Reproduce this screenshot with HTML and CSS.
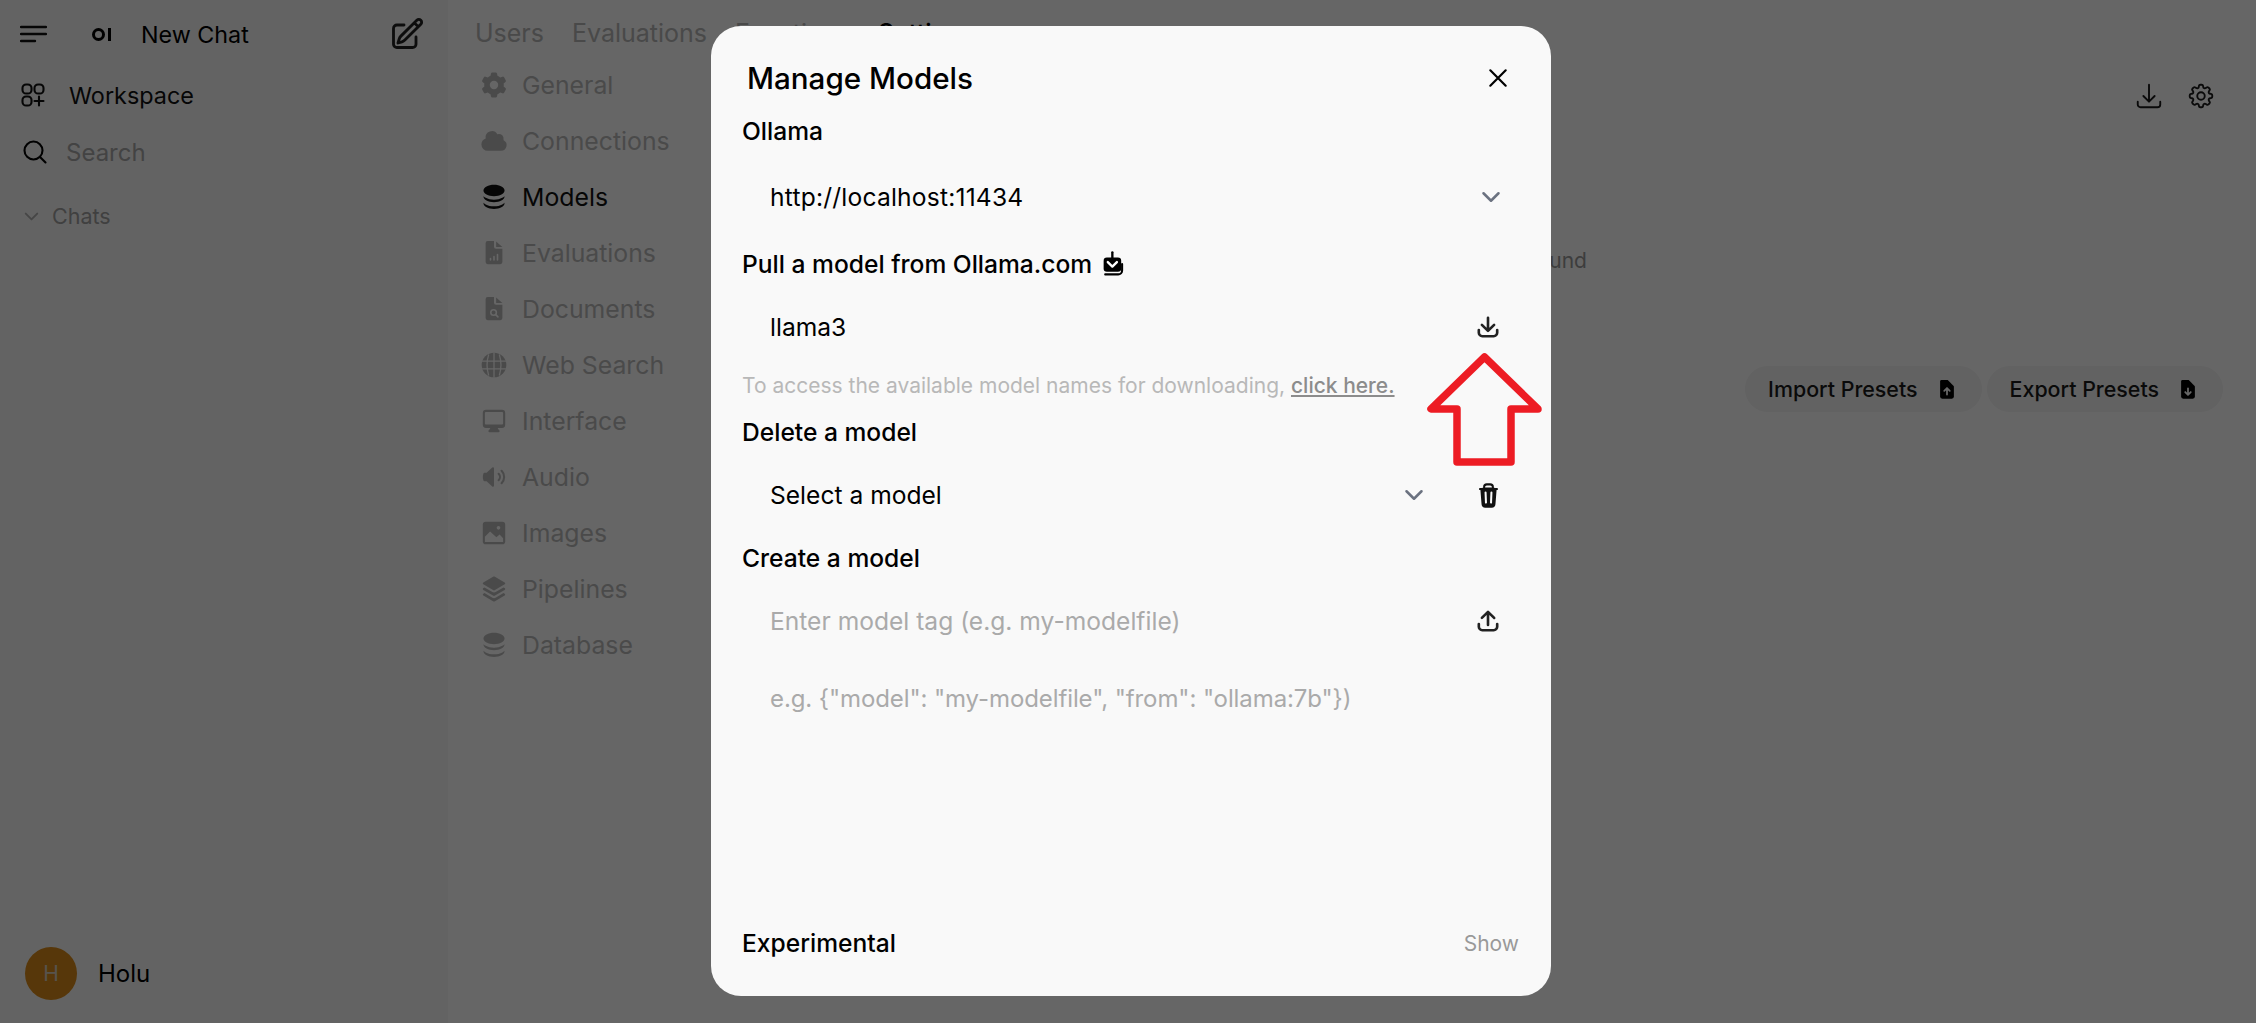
FILE: index.html
```html
<!DOCTYPE html>
<html>
<head>
  <title>Admin - Manage Models</title>
  <link rel="stylesheet" href="styles.css">
</head>
<body>
  <svg class="defs" width="0" height="0">
    <symbol id="tray" viewBox="0 0 16 16">
      <path d="M8.75 2.75a.75.75 0 0 0-1.5 0v5.69L5.03 6.22a.75.75 0 0 0-1.06 1.06l3.5 3.5a.75.75 0 0 0 1.06 0l3.5-3.5a.75.75 0 0 0-1.06-1.06L8.75 8.44V2.75Z"/>
      <path d="M3.5 9.75a.75.75 0 0 0-1.5 0v1.5A2.75 2.75 0 0 0 4.75 14h6.5A2.75 2.75 0 0 0 14 11.25v-1.5a.75.75 0 0 0-1.5 0v1.5c0 .69-.56 1.25-1.25 1.25h-6.5c-.69 0-1.25-.56-1.25-1.25v-1.5Z"/>
    </symbol>
    <symbol id="db" viewBox="0 0 24 24">
      <path d="M21 6.375c0 2.692-4.03 4.875-9 4.875S3 9.067 3 6.375 7.03 1.5 12 1.5s9 2.183 9 4.875z"/>
      <path transform="translate(0 1.5)" d="M12 12.75c2.685 0 5.19-.586 7.078-1.609a8.283 8.283 0 001.897-1.384c.016.121.025.244.025.368C21 12.817 16.97 15 12 15s-9-2.183-9-4.875c0-.124.009-.247.025-.368a8.285 8.285 0 001.897 1.384C6.809 12.164 9.315 12.75 12 12.75z"/>
      <path transform="translate(0 3.5)" d="M12 16.5c2.685 0 5.19-.586 7.078-1.609a8.282 8.282 0 001.897-1.384c.016.121.025.244.025.368 0 2.692-4.03 4.875-9 4.875s-9-2.183-9-4.875c0-.124.009-.247.025-.368a8.284 8.284 0 001.897 1.384C6.809 15.914 9.315 16.5 12 16.5z"/>
    </symbol>
    <symbol id="chevron" viewBox="0 0 20 20">
      <path d="M5 7.5l5 5 5-5" fill="none" stroke="currentColor" stroke-width="1.7" stroke-linecap="round" stroke-linejoin="round"/>
    </symbol>
  </svg>

  <div class="app">
    <aside class="sidebar">
      <div class="side-top">
        <svg class="ic-menu" viewBox="0 0 27 18" fill="none"><path d="M1 2h25M1 9h25M1 16h14" stroke="#111" stroke-width="2.4" stroke-linecap="round"/></svg>
        <svg class="logo" viewBox="0 0 19 13"><circle cx="6.5" cy="6.5" r="5" fill="none" stroke="#000" stroke-width="3"/><rect x="16" width="3" height="13" fill="#000"/></svg>
        <span class="new-chat">New Chat</span>
        <svg class="ic-edit" viewBox="0 0 24 24" fill="none" stroke="#222" stroke-width="1.9" stroke-linecap="round" stroke-linejoin="round"><path d="M16.862 4.487l1.687-1.688a1.875 1.875 0 112.652 2.652L10.582 16.07a4.5 4.5 0 01-1.897 1.13L6 18l.8-2.685a4.5 4.5 0 011.13-1.897l8.932-8.931zm0 0L19.5 7.125M18 14v4.75A2.25 2.25 0 0115.75 21H5.25A2.25 2.25 0 013 18.75V8.25A2.25 2.25 0 015.25 6H10"/></svg>
      </div>
      <div class="side-row workspace">
        <svg class="ic-work" viewBox="0 0 24 24" fill="none" stroke="#111" stroke-width="2.1" stroke-linecap="round"><rect x="1.5" y="1.5" width="9" height="9" rx="3.6"/><rect x="13.5" y="1.5" width="9" height="9" rx="3.6"/><rect x="1.5" y="13.5" width="9" height="9" rx="3.6"/><path d="M18 13.5v9M13.5 18h9"/></svg>
        <span>Workspace</span>
      </div>
      <div class="side-row search">
        <svg class="ic-search" viewBox="0 0 24 24" fill="none" stroke="#000" stroke-width="2.1" stroke-linecap="round"><circle cx="10.5" cy="10.5" r="9"/><path d="M17 17l5.5 5.5"/></svg>
        <span>Search</span>
      </div>
      <div class="side-row chats">
        <svg class="ic-chev-sm"><use href="#chevron"/></svg>
        <span>Chats</span>
      </div>
      <div class="user">
        <span class="avatar">H</span>
        <span class="user-name">Holu</span>
      </div>
    </aside>

    <main class="main">
      <nav class="tabs">
        <span>Users</span>
        <span>Evaluations</span>
        <span>Functions</span>
        <span class="tab-active">Settings</span>
      </nav>
      <div class="settings">
        <ul class="settings-nav">
          <li>
            <svg viewBox="0 0 20 20"><path fill-rule="evenodd" d="M7.84 1.804A1 1 0 018.82 1h2.36a1 1 0 01.98.804l.331 1.652a6.993 6.993 0 011.929 1.115l1.598-.54a1 1 0 011.186.447l1.18 2.044a1 1 0 01-.205 1.251l-1.267 1.113a7.047 7.047 0 010 2.228l1.267 1.113a1 1 0 01.206 1.25l-1.18 2.045a1 1 0 01-1.187.447l-1.598-.54a6.993 6.993 0 01-1.929 1.115l-.33 1.652a1 1 0 01-.98.804H8.82a1 1 0 01-.98-.804l-.331-1.652a6.993 6.993 0 01-1.929-1.115l-1.598.54a1 1 0 01-1.186-.447l-1.18-2.044a1 1 0 01.205-1.251l1.267-1.114a7.05 7.05 0 010-2.227L1.821 7.773a1 1 0 01-.206-1.25l1.18-2.045a1 1 0 011.187-.447l1.598.54A6.993 6.993 0 017.51 3.456l.33-1.652zM10 13a3 3 0 100-6 3 3 0 000 6z"/></svg>
            General
          </li>
          <li>
            <svg viewBox="0 0 20 20"><path d="M1 12.5A4.5 4.5 0 005.5 17H15a4 4 0 001.866-7.539 3.504 3.504 0 00-4.504-4.272A4.5 4.5 0 004.06 8.235 4.502 4.502 0 001 12.5z"/></svg>
            Connections
          </li>
          <li class="nav-active">
            <svg viewBox="0 0 24 24"><use href="#db"/></svg>
            Models
          </li>
          <li>
            <svg viewBox="0 0 20 20"><path d="M4 3a1.5 1.5 0 011.5-1.5H10v4A1.5 1.5 0 0011.5 7H16v9.5a1.5 1.5 0 01-1.5 1.5h-9A1.5 1.5 0 014 16.5z"/><path d="M11.5 1.8L16 5.8h-4.5z"/><path d="M7.5 15v-1M10 15v-2.5M12.5 15v-4" stroke="#fff" stroke-width="1.1" stroke-linecap="round"/></svg>
            Evaluations
          </li>
          <li>
            <svg viewBox="0 0 20 20"><path d="M4 3a1.5 1.5 0 011.5-1.5H10v4A1.5 1.5 0 0011.5 7H16v9.5a1.5 1.5 0 01-1.5 1.5h-9A1.5 1.5 0 014 16.5z"/><path d="M11.5 1.8L16 5.8h-4.5z"/><circle cx="9.7" cy="12.5" r="2" fill="none" stroke="#fff" stroke-width="1.1"/><path d="M11.2 14l1.6 1.6" stroke="#fff" stroke-width="1.1" stroke-linecap="round"/></svg>
            Documents
          </li>
          <li>
            <svg viewBox="0 0 20 20"><circle cx="10" cy="10" r="8.8"/><path d="M1.5 7.2h17M1.5 12.8h17M10 1v18M6.2 2.5C4.8 7 4.8 13 6.2 17.5M13.8 2.5c1.4 4.5 1.4 10.5 0 15" fill="none" stroke="#fff" stroke-width=".9"/></svg>
            Web Search
          </li>
          <li>
            <svg viewBox="0 0 20 20"><path fill-rule="evenodd" d="M2 4.25A2.25 2.25 0 014.25 2h11.5A2.25 2.25 0 0118 4.25v8.5A2.25 2.25 0 0115.75 15h-3.105a3.501 3.501 0 001.1 1.677A.75.75 0 0113.26 18H6.74a.75.75 0 01-.484-1.323A3.501 3.501 0 007.355 15H4.25A2.25 2.25 0 012 12.75v-8.5zm1.5 0a.75.75 0 01.75-.75h11.5a.75.75 0 01.75.75v7.5a.75.75 0 01-.75.75H4.25a.75.75 0 01-.75-.75v-7.5z"/></svg>
            Interface
          </li>
          <li>
            <svg viewBox="0 0 20 20"><path d="M10 3.75a.75.75 0 0 0-1.264-.546L4.703 7H3.167a.75.75 0 0 0-.7.48A6.985 6.985 0 0 0 2 10c0 .887.165 1.737.468 2.52.111.29.39.48.7.48h1.535l4.033 3.796A.75.75 0 0 0 10 16.25V3.75ZM15.95 5.05a.75.75 0 0 0-1.06 1.061 5.5 5.5 0 0 1 0 7.778.75.75 0 0 0 1.06 1.06 7 7 0 0 0 0-9.899Z"/><path d="M13.829 7.172a.75.75 0 0 0-1.061 1.06 2.5 2.5 0 0 1 0 3.536.75.75 0 0 0 1.06 1.06 4 4 0 0 0 0-5.656Z"/></svg>
            Audio
          </li>
          <li>
            <svg viewBox="0 0 20 20"><rect x="2" y="2" width="16" height="16" rx="2"/><path d="M3.5 16.5v-3.8l3.7-3.7 4.5 4 2.3-1.9 2.5 2.7v2.7z" fill="#fff"/><circle cx="13.2" cy="6.3" r="1.3" fill="#fff"/></svg>
            Images
          </li>
          <li>
            <svg viewBox="0 0 20 20"><path d="M3.196 12.87l-.825.483a.75.75 0 000 1.294l7.25 4.25a.75.75 0 00.758 0l7.25-4.25a.75.75 0 000-1.294l-.825-.484-5.666 3.322a2.25 2.25 0 01-2.276 0L3.196 12.87z"/><path d="M3.196 8.87l-.825.483a.75.75 0 000 1.294l7.25 4.25a.75.75 0 00.758 0l7.25-4.25a.75.75 0 000-1.294l-.825-.484-5.666 3.322a2.25 2.25 0 01-2.276 0L3.196 8.87z"/><path d="M10.38 1.103a.75.75 0 00-.76 0l-7.25 4.25a.75.75 0 000 1.294l7.25 4.25a.75.75 0 00.76 0l7.25-4.25a.75.75 0 000-1.294l-7.25-4.25z"/></svg>
            Pipelines
          </li>
          <li>
            <svg viewBox="0 0 24 24"><use href="#db"/></svg>
            Database
          </li>
        </ul>

        <section class="content">
          <div class="content-tools">
            <svg viewBox="0 0 24 24" fill="none" stroke="#1a1a1a" stroke-width="1.5" stroke-linecap="round" stroke-linejoin="round"><path d="M3 16.5v2.25A2.25 2.25 0 005.25 21h13.5A2.25 2.25 0 0021 18.75V16.5M16.5 12L12 16.5m0 0L7.5 12m4.5 4.5V3"/></svg>
            <svg viewBox="0 0 24 24" fill="none" stroke="#1a1a1a" stroke-width="1.5" stroke-linecap="round" stroke-linejoin="round"><path d="M10.343 3.94c.09-.542.56-.94 1.11-.94h1.093c.55 0 1.02.398 1.11.94l.149.894c.07.424.384.764.78.93.398.164.855.142 1.205-.108l.737-.527a1.125 1.125 0 011.45.12l.773.774c.39.389.44 1.002.12 1.45l-.527.737c-.25.35-.272.806-.107 1.204.165.397.505.71.93.78l.893.15c.543.09.94.56.94 1.109v1.094c0 .55-.397 1.02-.94 1.11l-.893.149c-.425.07-.765.383-.93.78-.165.398-.143.854.107 1.204l.527.738c.32.447.269 1.06-.12 1.45l-.774.773a1.125 1.125 0 01-1.449.12l-.738-.527c-.35-.25-.806-.272-1.203-.107-.397.165-.71.505-.781.929l-.149.894c-.09.542-.56.94-1.11.94h-1.094c-.55 0-1.019-.398-1.11-.94l-.148-.894c-.071-.424-.384-.764-.781-.93-.398-.164-.854-.142-1.204.108l-.738.527c-.447.32-1.06.269-1.45-.12l-.773-.774a1.125 1.125 0 01-.12-1.45l.527-.737c.25-.35.273-.806.108-1.204-.165-.397-.505-.71-.93-.78l-.894-.15c-.542-.09-.94-.56-.94-1.11v-1.094c0-.55.398-1.02.94-1.11l.894-.149c.424-.07.765-.383.93-.78.165-.398.143-.854-.107-1.204l-.527-.738a1.125 1.125 0 01.12-1.45l.773-.773a1.125 1.125 0 011.45-.12l.737.527c.35.25.807.272 1.204.107.397-.165.71-.505.78-.929l.15-.894z"/><path d="M15 12a3 3 0 11-6 0 3 3 0 016 0z"/></svg>
          </div>
          <p class="no-found">Models not found</p>
          <div class="presets">
            <button class="preset-btn">Import Presets
              <svg viewBox="0 0 16 16"><path d="M4 1.5h4.5L13 6v7.5a1.500 1.500 0 01-1.500 1.500h-7A1.500 1.500 0 013 13.500V2.500A1 1 0 014 1.500z"/><path d="M8 12V7.500M6 9.300l2-2 2 2" fill="none" stroke="#fff" stroke-width="1.3" stroke-linecap="round" stroke-linejoin="round"/></svg>
            </button>
            <button class="preset-btn">Export Presets
              <svg viewBox="0 0 16 16"><path d="M4 1.500h4.500L13 6v7.500a1.500 1.500 0 01-1.500 1.500h-7A1.500 1.500 0 013 13.500V2.500A1 1 0 014 1.500z"/><path d="M8 7.500V12M6 10.200l2 2 2-2" fill="none" stroke="#fff" stroke-width="1.3" stroke-linecap="round" stroke-linejoin="round"/></svg>
            </button>
          </div>
        </section>
      </div>
    </main>
  </div>

  <div class="overlay">
    <div class="modal">
      <header class="modal-head">
        <h2>Manage Models</h2>
        <svg class="ic-close" viewBox="0 0 20 20" fill="none" stroke="#000" stroke-width="2" stroke-linecap="round"><path d="M3 3l14 14M17 3L3 17"/></svg>
      </header>

      <div class="modal-body">
        <div class="label">Ollama</div>
        <div class="field field-first">
          <span class="url">http://localhost:11434</span>
          <svg class="ic-chev"><use href="#chevron"/></svg>
        </div>

        <div class="label label-next">Pull a model from Ollama.com
          <svg class="ic-pull" viewBox="0 0 20 20"><path d="M9.5 1v6" fill="none" stroke="#000" stroke-width="1.8" stroke-linecap="round"/><rect x="2.8" y="5" width="13.5" height="11" rx="2.5"/><path d="M6 8.500l3.500 3.500 3.500-3.500" fill="none" stroke="#fff" stroke-width="1.8" stroke-linecap="round" stroke-linejoin="round"/><path d="M4 18h10a3 3 0 003-3v-5" fill="none" stroke="#000" stroke-width="1.6" stroke-linecap="round"/></svg>
        </div>
        <div class="field field-pull">
          <span>llama3</span>
          <svg class="ic-act"><use href="#tray"/></svg>
        </div>
        <p class="hint">To access the available model names for downloading, <a>click here.</a></p>

        <div class="label label-del">Delete a model</div>
        <div class="field field-del">
          <span>Select a model</span>
          <svg class="ic-chev ic-chev-del"><use href="#chevron"/></svg>
          <svg class="ic-trash" viewBox="0 0 20 20"><path fill-rule="evenodd" d="M8.75 1A2.75 2.75 0 006 3.75v.443c-.795.077-1.584.176-2.365.298a.75.75 0 10.23 1.482l.149-.022.841 10.518A2.75 2.75 0 007.596 19h4.807a2.75 2.75 0 002.742-2.53l.841-10.52.149.023a.75.75 0 00.23-1.482A41.03 41.03 0 0014 4.193V3.75A2.75 2.75 0 0011.25 1h-2.5zM10 4c.84 0 1.673.025 2.5.075V3.75c0-.69-.56-1.25-1.25-1.25h-2.5c-.69 0-1.25.56-1.25 1.25v.325C8.327 4.025 9.16 4 10 4zM8.58 7.72a.75.75 0 00-1.5.06l.3 7.5a.75.75 0 101.5-.06l-.3-7.5zm4.34.06a.75.75 0 10-1.5-.06l-.3 7.5a.75.75 0 101.5.06l.3-7.5z"/></svg>
        </div>

        <div class="label label-create">Create a model</div>
        <div class="field field-pull placeholder">
          <span>Enter model tag (e.g. my-modelfile)</span>
          <svg class="ic-act" viewBox="0 0 16 16"><path d="M7.25 10.25a.75.75 0 0 0 1.5 0V4.56l2.22 2.22a.75.75 0 1 0 1.06-1.06l-3.5-3.5a.75.75 0 0 0-1.06 0l-3.5 3.5a.75.75 0 0 0 1.06 1.06l2.22-2.22v5.69Z"/><path d="M3.5 9.75a.75.75 0 0 0-1.5 0v1.5A2.75 2.75 0 0 0 4.75 14h6.5A2.75 2.75 0 0 0 14 11.25v-1.5a.75.75 0 0 0-1.5 0v1.5c0 .69-.56 1.25-1.25 1.25h-6.5c-.69 0-1.25-.56-1.25-1.25v-1.5Z"/></svg>
        </div>
        <div class="modelfile placeholder">e.g. {"model": "my-modelfile", "from": "ollama:7b"})</div>

        <div class="experimental">
          <span class="label">Experimental</span>
          <span class="show">Show</span>
        </div>
      </div>

      <svg class="red-arrow" viewBox="0 0 122 122" fill="none"><path d="M60.5 9L7 61h26v53h54V61h27z" stroke="#ed1c24" stroke-width="7.5" stroke-linejoin="round"/></svg>
    </div>
  </div>
</body>
</html>
```

FILE: styles.css
```css
* { box-sizing: border-box; }
html, body { margin: 0; height: 100%; overflow: hidden; }
body { font-family: Inter, "Liberation Sans", sans-serif; background: #fff; color: #000; position: relative; }
.defs { position: absolute; }
svg { display: block; flex-shrink: 0; }
svg:not([fill]) { fill: currentColor; }

.app { display: flex; height: 1023px; }

/* left sidebar */
.sidebar { width: 448px; flex-shrink: 0; background: #f8f8f8; display: flex; flex-direction: column; padding-left: 20px; padding-right: 23px; }
.side-top { display: flex; align-items: center; height: 68px; }
.ic-menu { width: 27px; height: 18px; }
.logo { margin-left: 45px; width: 19px; height: 13px; }
.new-chat { margin-left: 30px; font-size: 23.3px; flex: 1; color: #000; }
.ic-edit { width: 36px; height: 36px; }
.side-row { display: flex; align-items: center; font-size: 23.4px; }
.workspace { height: 54px; color: #111; }
.ic-work { width: 24px; height: 24px; margin-left: 1px; }
.workspace span { margin-left: 24px; }
.search { height: 54px; margin-top: 3px; color: #a9a9a9; font-size: 24px; }
.ic-search { width: 24px; height: 24px; margin-left: 3px; }
.search span { margin-left: 19px; }
.chats { height: 40px; margin-top: 17px; font-size: 21.5px; color: #a0a0a0; }
.ic-chev-sm { width: 23px; height: 23px; color: #b0b0b0; }
.chats span { margin-left: 9px; }
.user { margin-top: auto; margin-bottom: 23px; display: flex; align-items: center; padding-left: 5px; }
.avatar { width: 52px; height: 53px; border-radius: 50%; background: #d98b1a; color: #d9d0c0; font-size: 21px; display: flex; align-items: center; justify-content: center; }
.user-name { margin-left: 21px; font-size: 24px; }

/* main area behind the dialog */
.main { flex: 1; padding-left: 27px; padding-right: 33px; }
.tabs { display: flex; gap: 28px; height: 57px; padding-top: 9px; align-items: center; font-size: 25px; color: #b6b6b6; }
.tabs .tab-active { color: #000; font-weight: 500; }
.settings { display: flex; }
.settings-nav { list-style: none; margin: 0; padding: 0; width: 281px; flex-shrink: 0; color: #bababa; font-size: 24.8px; }
.settings-nav li { height: 56px; display: flex; align-items: center; gap: 14px; padding-left: 5px; }
.settings-nav svg { width: 28px; height: 28px; }
.settings-nav .nav-active { color: #111; }
.content { flex: 1; min-width: 0; }
.content-tools { display: flex; justify-content: flex-end; gap: 22px; height: 30px; margin-top: 24px; padding-right: 7px; }
.content-tools svg { width: 30px; height: 30px; }
.no-found { margin: 135px 0 0; font-size: 21px; line-height: 30px; color: #999; padding-left: 657px; }
.presets { display: flex; justify-content: flex-end; gap: 5px; margin-top: 90px; }
.preset-btn { height: 46px; border: 0; border-radius: 23px; background: #f4f4f4; color: #1a1a1a; font: 500 21.4px Inter, "Liberation Sans", sans-serif; display: flex; align-items: center; gap: 18px; padding: 0 24px 0 23px; }
.preset-btn svg { width: 22px; height: 22px; color: #000; }

/* dialog */
.overlay { position: absolute; inset: 0; background: rgba(0, 0, 0, 0.6); display: flex; align-items: center; justify-content: center; padding: 0 0 1px 6px; }
.modal { position: relative; width: 840px; height: 970px; background: #f9f9f9; border-radius: 30px; padding: 0 32px 0 31px; display: flex; flex-direction: column; }
.modal-head { display: flex; align-items: center; justify-content: space-between; height: 87px; padding: 16px 10px 0 5px; }
.modal-head h2 { margin: 0; font-size: 29.6px; font-weight: 500; }
.ic-close { width: 22px; height: 22px; }
.modal-body { flex: 1; display: flex; flex-direction: column; }
.label { font-size: 24.6px; line-height: 36px; font-weight: 450; display: flex; align-items: center; height: 36px; }
.field { display: flex; align-items: center; height: 60px; padding-left: 28px; font-size: 24.6px; }
.field span { flex: 1; }
.field .url { letter-spacing: .2px; }
.field-first { margin-top: 18px; }
.label-next { margin-top: 19px; }
.field-pull { margin-top: 15px; }
.hint { margin: 14px 0 0; font-size: 21px; line-height: 30px; color: #b8b8b8; }
.hint a { color: #8c8c8c; font-weight: 500; text-decoration: underline; }
.label-del { margin-top: 13px; }
.field-del { margin-top: 15px; }
.label-create { margin-top: 15px; }
.ic-chev { width: 30px; height: 30px; color: #6b7280; margin-right: 13px; }
.ic-chev-del { margin-right: 46px; }
.ic-act { width: 28px; height: 28px; color: #222; margin-right: 17px; }
.ic-trash { width: 27px; height: 27px; margin-right: 17px; color: #111; }
.ic-pull { width: 26px; height: 26px; margin-left: 8px; }
.placeholder { color: #aaa; }
.placeholder .ic-act { color: #222; }
.modelfile { margin-top: 33px; padding-left: 28px; font-size: 24px; line-height: 30px; letter-spacing: -.1px; }
.experimental { margin-top: auto; margin-bottom: 35px; display: flex; justify-content: space-between; align-items: center; }
.show { font-size: 21px; color: #999; }
.red-arrow { position: absolute; left: 713px; top: 322px; width: 122px; height: 122px; }
```
